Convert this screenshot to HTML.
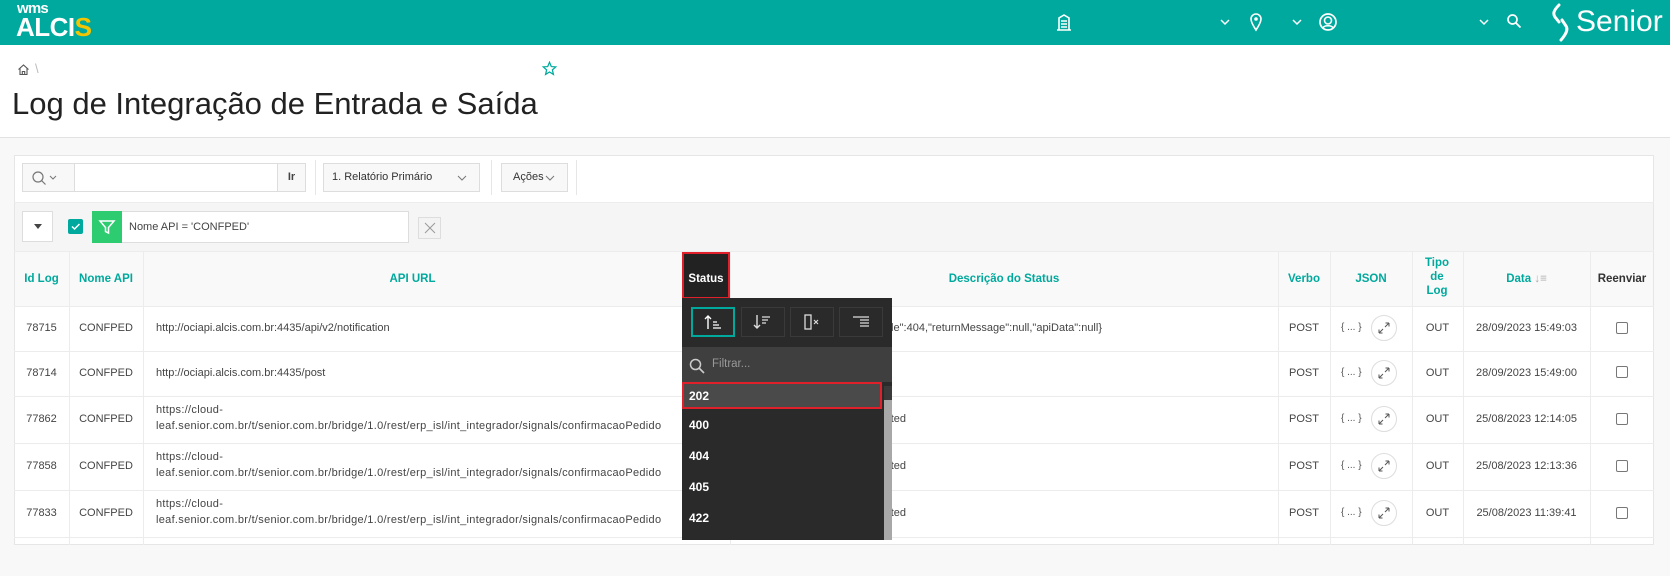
<!DOCTYPE html>
<html><head><meta charset="utf-8"><style>
*{box-sizing:border-box;margin:0;padding:0}
body{width:1673px;height:576px;overflow:hidden;background:#fff;font-family:"Liberation Sans",Arial,sans-serif;position:relative;color:#333}
.a{position:absolute}
#hdr{left:0;top:0;width:1670px;height:45px;background:#00a99d}
#main{left:0;top:137px;width:1670px;height:439px;background:#f8f8f8;border-top:1px solid #e2e2e2}
#panel{left:14px;top:155px;width:1640px;height:390px;background:#fff;border:1px solid #e6e6e6}
.t{font-size:11px;color:#444;white-space:nowrap}
.th{font-size:11.5px;font-weight:bold;color:#00a99d;text-align:center;line-height:14px}
.vl{width:1px;background:#ececec;top:251px;height:294px}
.hl{height:1px;background:#ececec;left:14px;width:1640px}
.cb{width:12px;height:12px;border:1px solid #777;border-radius:2px;background:#fff}
.circ{width:26px;height:26px;border:1px solid #ddd;border-radius:50%}
.mi{font-size:12px;color:#fff;font-weight:bold}
.mb{width:44px;height:30px;border:1px solid #3a3a3a;background:#2a2a2a;top:307px}
.u{left:156px;line-height:16px;letter-spacing:0.3px}
</style></head><body>
<div id="hdr" class="a"></div>
<div class="a" style="left:17px;top:0px;font-size:15px;font-weight:bold;color:#fff;letter-spacing:-0.8px">wms</div>
<div class="a" style="left:16px;top:13px;font-size:26px;font-weight:bold;color:#fff;letter-spacing:-0.5px;line-height:28px">ALCI<span style="color:#f5c400">S</span></div>
<svg class="a" style="left:1056px;top:13px" width="16" height="18" viewBox="0 0 16 18"><path d="M3 17V5l5-3 5 3v12zM1 17h14M5 8h6M5 11h6M5 14h6" stroke="#fff" stroke-width="1.6" fill="none"/></svg>
<svg class="a" style="left:1219px;top:17px" width="12" height="10"><path d="M2 3l4 4 4-4" stroke="#fff" stroke-width="1.5" fill="none"/></svg>
<svg class="a" style="left:1249px;top:12px" width="14" height="20"><path d="M7 18C3 12 2 9 2 7a5 5 0 0110 0c0 2-1 5-5 11z" stroke="#fff" stroke-width="1.6" fill="none"/><circle cx="7" cy="7" r="1.8" fill="#fff"/></svg>
<svg class="a" style="left:1291px;top:17px" width="12" height="10"><path d="M2 3l4 4 4-4" stroke="#fff" stroke-width="1.5" fill="none"/></svg>
<svg class="a" style="left:1318px;top:12px" width="20" height="20"><circle cx="10" cy="10" r="8" stroke="#fff" stroke-width="1.7" fill="none"/><circle cx="10" cy="8.5" r="3.5" stroke="#fff" stroke-width="1.6" fill="none"/><path d="M5 16c1-3 9-3 10 0" stroke="#fff" stroke-width="1.5" fill="none"/></svg>
<svg class="a" style="left:1478px;top:17px" width="12" height="10"><path d="M2 3l4 4 4-4" stroke="#fff" stroke-width="1.5" fill="none"/></svg>
<svg class="a" style="left:1506px;top:13px" width="16" height="16"><circle cx="6.5" cy="6.5" r="4.5" stroke="#fff" stroke-width="1.7" fill="none"/><path d="M10 10l4.5 4.5" stroke="#fff" stroke-width="1.8"/></svg>
<svg class="a" style="left:1549px;top:3px" width="24" height="40" viewBox="0 0 24 40"><path d="M10 2C4 8 4 11 6 14l4 5" stroke="#fff" stroke-width="3" fill="none" stroke-linecap="round"/><path d="M13 17l4 6c2 3 1 7-5 14" stroke="#fff" stroke-width="3" fill="none" stroke-linecap="round"/></svg>
<div class="a" style="left:1576px;top:5px;font-size:30px;color:#fff;line-height:34px">Senior</div>
<svg class="a" style="left:17px;top:63px" width="13" height="13"><path d="M1.5 6.5L6.5 2l5 4.5M3 5.5V11.5h7V5.5M5.3 11.5V8.5h2.4v3" stroke="#555" stroke-width="1.1" fill="none"/></svg>
<div class="a" style="left:35px;top:61px;font-size:13px;color:#bbb">\</div>
<svg class="a" style="left:542px;top:61px" width="15" height="15" viewBox="0 0 24 24"><path d="M12 2l2.9 6.9 7.1.6-5.4 4.7 1.7 7.3L12 17.6 5.7 21.5l1.7-7.3L2 9.5l7.1-.6z" stroke="#00a99d" stroke-width="2" fill="none"/></svg>
<div class="a" style="left:12px;top:86px;font-size:31px;color:#222;white-space:nowrap;letter-spacing:0px">Log de Integração de Entrada e Saída</div>
<div id="main" class="a"></div>
<div id="panel" class="a"></div>
<div class="a" style="left:22px;top:163px;width:284px;height:29px;border:1px solid #ddd;background:#fff"></div>
<div class="a" style="left:22px;top:163px;width:53px;height:29px;border:1px solid #ddd;background:#f8f8f8"></div>
<svg class="a" style="left:31px;top:170px" width="32" height="16"><circle cx="7" cy="7" r="5" stroke="#777" stroke-width="1.2" fill="none"/><path d="M10.5 10.5l4 4" stroke="#777" stroke-width="1.2"/><path d="M19 6l3 3 3-3" stroke="#777" stroke-width="1" fill="none"/></svg>
<div class="a" style="left:277px;top:163px;width:29px;height:29px;border:1px solid #ddd;background:#f8f8f8;font-size:11px;font-weight:bold;color:#444;text-align:center;line-height:27px">Ir</div>
<div class="a" style="left:315px;top:160px;width:1px;height:35px;background:#e6e6e6"></div>
<div class="a" style="left:323px;top:163px;width:157px;height:29px;border:1px solid #ddd;background:#f8f8f8;font-size:11px;color:#333;line-height:27px;padding-left:8px">1. Relatório Primário</div>
<svg class="a" style="left:457px;top:174px" width="10" height="8"><path d="M1 2l4 4 4-4" stroke="#777" stroke-width="1" fill="none"/></svg>
<div class="a" style="left:491px;top:160px;width:1px;height:35px;background:#e6e6e6"></div>
<div class="a" style="left:501px;top:163px;width:67px;height:29px;border:1px solid #ddd;background:#f8f8f8;font-size:11px;color:#333;line-height:27px;padding-left:11px">Ações</div>
<svg class="a" style="left:545px;top:174px" width="10" height="8"><path d="M1 2l4 4 4-4" stroke="#777" stroke-width="1" fill="none"/></svg>
<div class="a" style="left:576px;top:160px;width:1px;height:35px;background:#e6e6e6"></div>
<div class="a hl" style="top:202px"></div>
<div class="a" style="left:15px;top:203px;width:1638px;height:48px;background:#f5f5f5"></div>
<div class="a" style="left:22px;top:211px;width:31px;height:31px;border:1px solid #ddd;background:#fff"></div>
<svg class="a" style="left:33px;top:223px" width="10" height="8"><path d="M1 1h8L5 6z" fill="#444"/></svg>
<div class="a" style="left:68px;top:219px;width:15px;height:15px;background:#00a99d;border-radius:2px"></div>
<svg class="a" style="left:70px;top:221px" width="11" height="11"><path d="M2 5.5l2.5 2.5L9.5 3" stroke="#fff" stroke-width="1.5" fill="none"/></svg>
<div class="a" style="left:92px;top:211px;width:317px;height:32px;border:1px solid #ddd;background:#fff"></div>
<div class="a" style="left:92px;top:211px;width:30px;height:32px;background:#2ecc71"></div>
<svg class="a" style="left:98px;top:218px" width="18" height="18"><path d="M2 3h14l-5.5 6.5V15l-3-1.5V9.5z" stroke="#fff" stroke-width="1.5" fill="none"/></svg>
<div class="a t" style="left:129px;top:221px;font-size:11px">Nome API = 'CONFPED'</div>
<div class="a" style="left:418px;top:217px;width:23px;height:22px;border:1px solid #ddd;background:#f3f3f3"></div>
<svg class="a" style="left:424px;top:222px" width="12" height="12"><path d="M1 1l10 10M11 1L1 11" stroke="#999" stroke-width="1"/></svg>
<div class="a hl" style="top:251px"></div>
<div class="a" style="left:15px;top:252px;width:1638px;height:54px;background:#f9f9f9"></div>
<div class="a hl" style="top:306px"></div>
<div class="a th" style="left:14px;top:272px;width:55px">Id Log</div>
<div class="a th" style="left:69px;top:272px;width:74px">Nome API</div>
<div class="a th" style="left:143px;top:272px;width:539px">API URL</div>
<div class="a" style="left:682px;top:252px;width:48px;height:47px;background:#222;border:2px solid #e0202a"></div>
<div class="a th" style="left:682px;top:272px;width:48px;color:#fff">Status</div>
<div class="a th" style="left:730px;top:272px;width:548px">Descrição do Status</div>
<div class="a th" style="left:1278px;top:272px;width:52px">Verbo</div>
<div class="a th" style="left:1330px;top:272px;width:82px">JSON</div>
<div class="a th" style="left:1412px;top:256px;width:50px">Tipo<br>de<br>Log</div>
<div class="a th" style="left:1463px;top:272px;width:127px">Data <span style="color:#aaa;font-weight:normal">↓≡</span></div>
<div class="a th" style="left:1590px;top:272px;width:64px;color:#333">Reenviar</div>
<div class="a vl" style="left:69px"></div><div class="a vl" style="left:143px"></div>
<div class="a vl" style="left:730px"></div><div class="a vl" style="left:1278px"></div>
<div class="a vl" style="left:1330px"></div><div class="a vl" style="left:1412px"></div>
<div class="a vl" style="left:1463px"></div><div class="a vl" style="left:1590px"></div>
<div class="a hl" style="top:351px"></div><div class="a hl" style="top:396px"></div>
<div class="a hl" style="top:443px"></div><div class="a hl" style="top:490px"></div><div class="a hl" style="top:537px"></div>

<div class="a t" style="left:14px;top:322px;width:55px;text-align:center">78715</div>
<div class="a t" style="left:69px;top:322px;width:74px;text-align:center">CONFPED</div>
<div class="a t" style="left:156px;top:322px">http://ociapi.alcis.com.br:4435/api/v2/notification</div>
<div class="a t" style="left:740px;top:322px;width:362px;text-align:right;overflow:hidden;direction:rtl"><span style="direction:ltr;unicode-bidi:embed">{"returnStatus":"FAIL","returnCode":404,"returnMessage":null,"apiData":null}</span></div>

<div class="a t" style="left:14px;top:367px;width:55px;text-align:center">78714</div>
<div class="a t" style="left:69px;top:367px;width:74px;text-align:center">CONFPED</div>
<div class="a t" style="left:156px;top:367px">http://ociapi.alcis.com.br:4435/post</div>

<div class="a t" style="left:14px;top:413px;width:55px;text-align:center">77862</div>
<div class="a t" style="left:69px;top:413px;width:74px;text-align:center">CONFPED</div>
<div class="a t u" style="top:402px">https://cloud-<br>leaf.senior.com.br/t/senior.com.br/bridge/1.0/rest/erp_isl/int_integrador/signals/confirmacaoPedido</div>
<div class="a t" style="left:794px;top:413px;width:112px;text-align:right">202 Accepted</div>

<div class="a t" style="left:14px;top:460px;width:55px;text-align:center">77858</div>
<div class="a t" style="left:69px;top:460px;width:74px;text-align:center">CONFPED</div>
<div class="a t u" style="top:449px">https://cloud-<br>leaf.senior.com.br/t/senior.com.br/bridge/1.0/rest/erp_isl/int_integrador/signals/confirmacaoPedido</div>
<div class="a t" style="left:794px;top:460px;width:112px;text-align:right">202 Accepted</div>

<div class="a t" style="left:14px;top:507px;width:55px;text-align:center">77833</div>
<div class="a t" style="left:69px;top:507px;width:74px;text-align:center">CONFPED</div>
<div class="a t u" style="top:496px">https://cloud-<br>leaf.senior.com.br/t/senior.com.br/bridge/1.0/rest/erp_isl/int_integrador/signals/confirmacaoPedido</div>
<div class="a t" style="left:794px;top:507px;width:112px;text-align:right">202 Accepted</div>

<div class="a t" style="left:1278px;top:322px;width:52px;text-align:center">POST</div>
<div class="a t" style="left:1278px;top:367px;width:52px;text-align:center">POST</div>
<div class="a t" style="left:1278px;top:413px;width:52px;text-align:center">POST</div>
<div class="a t" style="left:1278px;top:460px;width:52px;text-align:center">POST</div>
<div class="a t" style="left:1278px;top:507px;width:52px;text-align:center">POST</div>
<div class="a t" style="left:1341px;top:322px;font-size:10px;color:#555">{ ... }</div>
<div class="a t" style="left:1341px;top:367px;font-size:10px;color:#555">{ ... }</div>
<div class="a t" style="left:1341px;top:413px;font-size:10px;color:#555">{ ... }</div>
<div class="a t" style="left:1341px;top:460px;font-size:10px;color:#555">{ ... }</div>
<div class="a t" style="left:1341px;top:507px;font-size:10px;color:#555">{ ... }</div>
<div class="a circ" style="left:1371px;top:315px"></div>
<div class="a circ" style="left:1371px;top:360px"></div>
<div class="a circ" style="left:1371px;top:406px"></div>
<div class="a circ" style="left:1371px;top:453px"></div>
<div class="a circ" style="left:1371px;top:500px"></div>
<svg class="a" style="left:1377px;top:321px" width="14" height="14"><path d="M2 12l4-4M2 12V8.5M2 12h3.5M12 2L8 6M12 2v3.5M12 2H8.5" stroke="#555" stroke-width="1" fill="none"/></svg>
<svg class="a" style="left:1377px;top:366px" width="14" height="14"><path d="M2 12l4-4M2 12V8.5M2 12h3.5M12 2L8 6M12 2v3.5M12 2H8.5" stroke="#555" stroke-width="1" fill="none"/></svg>
<svg class="a" style="left:1377px;top:412px" width="14" height="14"><path d="M2 12l4-4M2 12V8.5M2 12h3.5M12 2L8 6M12 2v3.5M12 2H8.5" stroke="#555" stroke-width="1" fill="none"/></svg>
<svg class="a" style="left:1377px;top:459px" width="14" height="14"><path d="M2 12l4-4M2 12V8.5M2 12h3.5M12 2L8 6M12 2v3.5M12 2H8.5" stroke="#555" stroke-width="1" fill="none"/></svg>
<svg class="a" style="left:1377px;top:506px" width="14" height="14"><path d="M2 12l4-4M2 12V8.5M2 12h3.5M12 2L8 6M12 2v3.5M12 2H8.5" stroke="#555" stroke-width="1" fill="none"/></svg>
<div class="a t" style="left:1412px;top:322px;width:51px;text-align:center">OUT</div>
<div class="a t" style="left:1412px;top:367px;width:51px;text-align:center">OUT</div>
<div class="a t" style="left:1412px;top:413px;width:51px;text-align:center">OUT</div>
<div class="a t" style="left:1412px;top:460px;width:51px;text-align:center">OUT</div>
<div class="a t" style="left:1412px;top:507px;width:51px;text-align:center">OUT</div>
<div class="a t" style="left:1463px;top:322px;width:127px;text-align:center">28/09/2023 15:49:03</div>
<div class="a t" style="left:1463px;top:367px;width:127px;text-align:center">28/09/2023 15:49:00</div>
<div class="a t" style="left:1463px;top:413px;width:127px;text-align:center">25/08/2023 12:14:05</div>
<div class="a t" style="left:1463px;top:460px;width:127px;text-align:center">25/08/2023 12:13:36</div>
<div class="a t" style="left:1463px;top:507px;width:127px;text-align:center">25/08/2023 11:39:41</div>
<div class="a cb" style="left:1616px;top:322px"></div>
<div class="a cb" style="left:1616px;top:366px"></div>
<div class="a cb" style="left:1616px;top:413px"></div>
<div class="a cb" style="left:1616px;top:460px"></div>
<div class="a cb" style="left:1616px;top:507px"></div>

<div class="a" style="left:682px;top:298px;width:210px;height:242px;background:#2a2a2a"></div>
<div class="a" style="left:682px;top:347px;width:210px;height:35px;background:#3f3f3f"></div>
<div class="a mb" style="left:691px;border:2px solid #00a99d"></div>
<div class="a mb" style="left:741px"></div>
<div class="a mb" style="left:790px"></div>
<div class="a mb" style="left:839px"></div>
<svg class="a" style="left:704px;top:314px" width="20" height="16"><path d="M4 15V2M1 5l3-3 3 3" stroke="#fff" stroke-width="1.4" fill="none"/><path d="M9 8h4M9 11h6M9 14h8" stroke="#fff" stroke-width="1.2"/></svg>
<svg class="a" style="left:753px;top:314px" width="20" height="16"><path d="M4 1v13M1 11l3 3 3-3" stroke="#ddd" stroke-width="1.4" fill="none"/><path d="M9 3h8M9 6h6M9 9h4" stroke="#ddd" stroke-width="1.2"/></svg>
<svg class="a" style="left:803px;top:314px" width="20" height="16"><rect x="2" y="1" width="6" height="14" stroke="#ddd" stroke-width="1.3" fill="none"/><path d="M11 6l4 4M15 6l-4 4" stroke="#ddd" stroke-width="1.2"/></svg>
<svg class="a" style="left:852px;top:314px" width="20" height="16"><path d="M1 3h16M8 6h9M8 9h9M8 12h9" stroke="#ddd" stroke-width="1.3"/></svg>
<svg class="a" style="left:689px;top:358px" width="16" height="16"><circle cx="6.5" cy="6.5" r="5" stroke="#ccc" stroke-width="1.5" fill="none"/><path d="M10 10l5 5" stroke="#ccc" stroke-width="1.6"/></svg>
<div class="a" style="left:712px;top:358px;font-size:11.5px;color:#999">Filtrar...</div>
<div class="a" style="left:884px;top:386px;width:8px;height:154px;background:#3a3a3a"></div>
<div class="a" style="left:884px;top:400px;width:8px;height:140px;background:#a8a8a8"></div>
<div class="a" style="left:682px;top:382px;width:200px;height:27px;background:#4a4a4a;border:2px solid #e0202a"></div>
<div class="a mi" style="left:689px;top:389px">202</div>
<div class="a mi" style="left:689px;top:418px">400</div>
<div class="a mi" style="left:689px;top:449px">404</div>
<div class="a mi" style="left:689px;top:480px">405</div>
<div class="a mi" style="left:689px;top:511px">422</div>
</body></html>
